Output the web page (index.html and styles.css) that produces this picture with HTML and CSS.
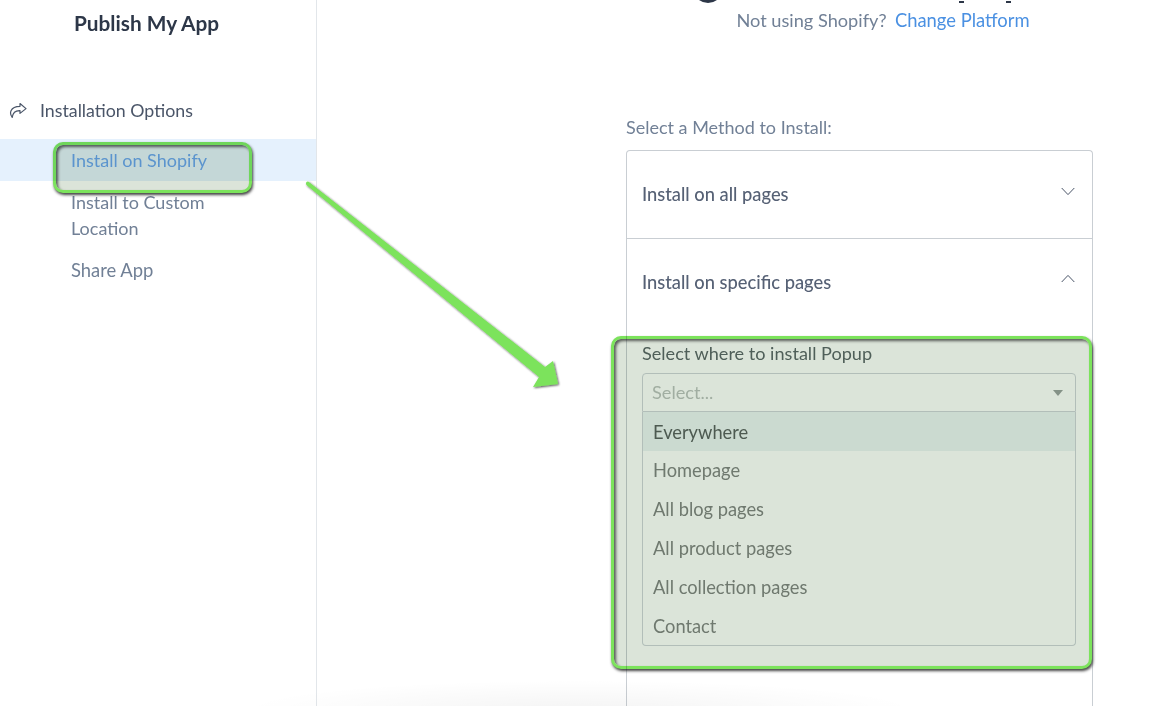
FILE: index.html
```html
<!DOCTYPE html>
<html lang="en">
<head>
<meta charset="utf-8">
<title>Publish My App</title>
<link rel="stylesheet" href="styles.css">
</head>
<body>
<div class="page">
  <aside class="sidebar">
    <h1 class="brand">Publish My App</h1>
    <div class="section">
      <svg class="share" width="18" height="17" viewBox="0 0 18 17" fill="none" stroke="#4a5568" stroke-width="1.2" stroke-linejoin="round" stroke-linecap="round"><path d="M11 1.5 L17 6.6 L11 11.4 V8.6 C7 8.4 4 9.8 3.2 15.4 C0.2 11.5 0.8 4.4 11 4.3 Z"/></svg>
      <span>Installation Options</span>
    </div>
    <nav class="nav">
      <a class="nav-item active">Install on Shopify</a>
      <a class="nav-item">Install to Custom Location</a>
      <a class="nav-item">Share App</a>
    </nav>
  </aside>
  <main class="main">
    <div class="head">
      <div class="clip">
        <span class="logo-disc"></span>
        <span class="stub stub-p"></span>
        <span class="stub stub-y"></span>
      </div>
      <p class="platform">Not using Shopify?&nbsp; <a>Change Platform</a></p>
    </div>
    <div class="method">
      <p class="method-label">Select a Method to Install:</p>
      <div class="accordion">
        <div class="acc-row">
          <span>Install on all pages</span>
          <svg class="chev chev-down" width="14" height="9" viewBox="0 0 14 9" fill="none" stroke="#4a5568" stroke-width="1"><path d="M0.7 1 L7 7.6 L13.3 1"/></svg>
        </div>
        <div class="acc-row open">
          <span>Install on specific pages</span>
          <svg class="chev chev-up" width="14" height="9" viewBox="0 0 14 9" fill="none" stroke="#4a5568" stroke-width="1"><path d="M0.7 8 L7 1.4 L13.3 8"/></svg>
        </div>
        <div class="picker">
          <label class="picker-label">Select where to install Popup</label>
          <div class="select">
            <span>Select...</span>
            <i class="caret"></i>
          </div>
          <ul class="options">
            <li class="hover">Everywhere</li>
            <li>Homepage</li>
            <li>All blog pages</li>
            <li>All product pages</li>
            <li>All collection pages</li>
            <li>Contact</li>
          </ul>
        </div>
      </div>
    </div>
  </main>
</div>
<div class="mark mark-nav"></div>
<div class="mark mark-panel"></div>
<svg class="arrow" width="270" height="220" viewBox="0 0 270 220">
  <defs><filter id="sh" x="-10%" y="-10%" width="125%" height="125%"><feDropShadow dx="1" dy="1" stdDeviation="1" flood-color="#000" flood-opacity="0.7"/></filter></defs>
  <path filter="url(#sh)" d="M2.5 10 Q4 9 5.5 10.5 L241 195 L249 189 L254 212 L229 215 L235 205 L2.5 13 Q1.5 11.5 2.5 10 Z" fill="#7ce35c"/>
</svg>
<div class="floor"></div>
</body>
</html>
```
FILE: styles.css
```css
* { box-sizing: border-box; }
html, body { margin: 0; height: 100%; overflow: hidden; }
body { background: #fff; font-family: "Lato", "Noto Sans", sans-serif; color: #4a5568; position: relative; }
.page { display: flex; height: 706px; }
.sidebar { width: 317px; flex: none; border-right: 1px solid #e2e6ea; }
.brand { margin: 11px 0 0; font-size: 20.8px; line-height: 24px; font-weight: 700; color: #2d3748; text-align: center; padding-right: 23px; }
.section { margin-top: 63px; height: 24px; display: flex; align-items: center; padding-left: 9px; gap: 13px; font-size: 17.8px; color: #4a5568; }
.nav { margin-top: 17px; display: flex; flex-direction: column; }
.nav-item { display: block; padding: 8px 71px; font-size: 18px; line-height: 26px; color: #718096; }
.nav-item.active { background: #e5f1fd; color: #6aa6f2; height: 42px; }
.nav-item:nth-child(2) { padding-right: 90px; }
.nav-item:nth-child(3) { font-size: 18.4px; }
.main { flex: 1; min-width: 0; padding-left: 309px; }
.head { width: 467px; height: 116px; position: relative; text-align: center; }
.clip { height: 4px; position: relative; overflow: hidden; }
.logo-disc { position: absolute; left: 67px; top: -27px; width: 30px; height: 30px; border-radius: 50%; background: #2d3748; }
.stub { position: absolute; top: 1px; height: 2px; background: #2d3748; }
.stub-p { left: 333px; width: 5px; }
.stub-y { left: 380px; width: 5px; }
.platform { margin: 7px 0 0; font-size: 18.2px; line-height: 18px; padding-left: 47px; color: #718096; white-space: nowrap; }
.platform a { color: #4a90e2; font-size: 18.4px; margin-left: -1px; }
.method { width: 467px; }
.method-label { margin: 0; font-size: 18px; line-height: 22px; height: 34px; color: #718096; }
.accordion { border: 1px solid #c9ced3; border-bottom: 0; border-radius: 4px 4px 0 0; height: 560px; }
.acc-row { height: 88px; padding: 0 16px 2px 15px; display: flex; align-items: center; justify-content: space-between; font-size: 18.3px; border-bottom: 1px solid #c9ced3; font-weight: 500; color: #566175; }
.acc-row.open { border-bottom: 0; }
.chev { margin-right: 1px; }
.chev-down { margin-top: -5px; }
.chev-up { margin-top: -8px; }
.picker { padding: 14px 16px 0 15px; }
.picker-label { display: block; font-size: 18.1px; line-height: 24px; color: #5c6a68; }
.select { margin-top: 8px; height: 39px; border: 1px solid #cfd5da; border-radius: 4px 4px 0 0; display: flex; align-items: center; justify-content: space-between; padding: 0 12px 2px 9px; font-size: 18.2px; color: #bcc3be; }
.caret { width: 0; height: 0; border-left: 5px solid transparent; border-right: 5px solid transparent; border-top: 6px solid #9aa39f; margin-top: 2px; }
.options { margin: 0; padding: 0; list-style: none; border: 1px solid #cfd5da; border-top: 0; border-radius: 0 0 4px 4px; }
.options li { height: 38.9px; display: flex; align-items: center; padding-left: 10px; font-size: 18.3px; color: #818782; }
.options li.hover { background: #edf4f5; color: #5a655f; padding-top: 1px; }
.mark { position: absolute; border: 3px solid #7ce35c; border-radius: 10px; background: #dbe4d9; mix-blend-mode: multiply; box-shadow: 1px 2px 3px rgba(0, 0, 0, 0.75), inset 2px 2px 3px rgba(0, 0, 0, 0.6); }
.mark-nav { left: 53px; top: 142px; width: 199px; height: 51px; }
.mark-panel { left: 611px; top: 336px; width: 481px; height: 333px; }
.arrow { position: absolute; left: 304px; top: 172px; }
.floor { position: absolute; left: 240px; bottom: -34px; width: 680px; height: 60px; border-radius: 50%; background: radial-gradient(closest-side, rgba(0, 0, 0, 0.045), rgba(0, 0, 0, 0)); pointer-events: none; }
```
